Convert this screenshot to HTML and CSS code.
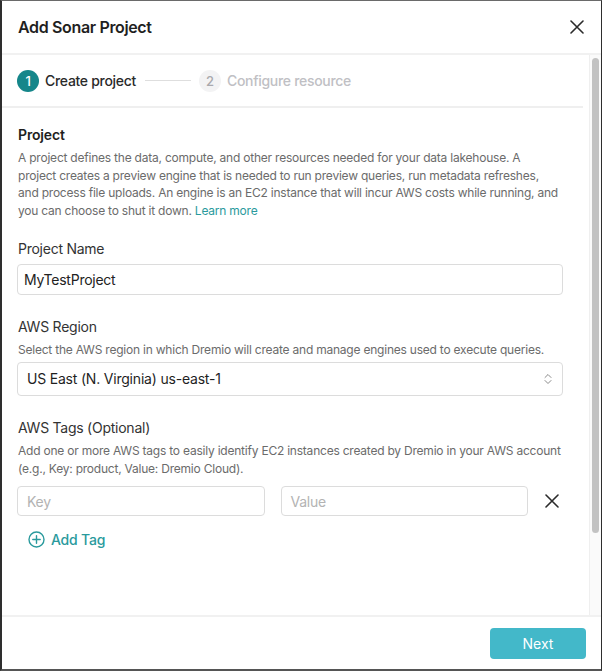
FILE: index.html
```html
<!DOCTYPE html>
<html lang="en">
<head>
<meta charset="utf-8">
<title>Add Sonar Project</title>
<link rel="stylesheet" href="styles.css">
</head>
<body>
<div class="dialog">
  <header class="dialog-header">
    <h1 class="dialog-title">Add Sonar Project</h1>
    <button class="icon-btn close-btn" aria-label="Close">
      <svg width="14" height="14" viewBox="0 0 14 14"><path d="M1 1L13 13M13 1L1 13" stroke="#2b2b2b" stroke-width="1.6" fill="none" stroke-linecap="round"/></svg>
    </button>
  </header>
  <div class="dialog-body">
    <div class="content">
      <div class="stepper">
        <div class="step active"><span class="step-num">1</span><span class="step-label">Create project</span></div>
        <span class="step-line"></span>
        <div class="step"><span class="step-num">2</span><span class="step-label">Configure resource</span></div>
      </div>
      <div class="form">
        <h2 class="section-title">Project</h2>
        <p class="help intro">A project defines the data, compute, and other resources needed for your data lakehouse. A project creates a preview engine that is needed to run preview queries, run metadata refreshes, and process file uploads. An engine is an EC2 instance that will incur AWS costs while running, and you can choose to shut it down. <a class="link" href="#">Learn more</a></p>

        <label class="field-label">Project Name</label>
        <div class="input filled">MyTestProject</div>

        <label class="field-label">AWS Region</label>
        <p class="help tight">Select the AWS region in which Dremio will create and manage engines used to execute queries.</p>
        <div class="select">
          <span>US East (N. Virginia) us-east-1</span>
          <svg width="8" height="12" viewBox="0 0 8 12"><path d="M1 4.5L4 1.5L7 4.5M1 7.5L4 10.5L7 7.5" stroke="#8a8a8a" stroke-width="1" fill="none" stroke-linecap="round" stroke-linejoin="round"/></svg>
        </div>

        <label class="field-label">AWS Tags (Optional)</label>
        <p class="help tight">Add one or more AWS tags to easily identify EC2 instances created by Dremio in your AWS account (e.g., Key: product, Value: Dremio Cloud).</p>
        <div class="tag-row">
          <div class="input placeholder">Key</div>
          <div class="input placeholder">Value</div>
          <button class="icon-btn remove-btn" aria-label="Remove tag">
            <svg width="14" height="14" viewBox="0 0 14 14"><path d="M1 1L13 13M13 1L1 13" stroke="#2b2b2b" stroke-width="1.6" fill="none" stroke-linecap="round"/></svg>
          </button>
        </div>
        <button class="add-tag">
          <svg width="17" height="17" viewBox="0 0 17 17"><circle cx="8.5" cy="8.5" r="7.5" stroke="#2a9a9d" stroke-width="1.4" fill="none"/><path d="M8.5 4.8V12.2M4.8 8.5H12.2" stroke="#2a9a9d" stroke-width="1.4" stroke-linecap="round"/></svg>
          <span>Add Tag</span>
        </button>
      </div>
    </div>
    <div class="scroll-track"><div class="scroll-thumb"></div></div>
  </div>
  <footer class="dialog-footer">
    <button class="btn-primary">Next</button>
  </footer>
</div>
</body>
</html>
```
FILE: styles.css
```css
* { box-sizing: border-box; }
html, body { margin: 0; padding: 0; background: #fff; }
body { font-family: Inter, "Noto Sans", "Liberation Sans", sans-serif; color: #202124; letter-spacing: -0.15px; }

.dialog {
  width: 602px;
  height: 671px;
  display: flex;
  flex-direction: column;
  border-top: 1px solid #6a6a6a;
  border-left: 2px solid #2e2e2e;
  border-right: 1px solid #2e2e2e;
  border-bottom: 2px solid #555;
  background: #fff;
}

.dialog-header {
  height: 54px;
  flex: none;
  display: flex;
  align-items: center;
  justify-content: space-between;
  padding: 0 17px 0 16px;
  border-bottom: 2px solid #f1f1f1;
}
.dialog-title { margin: 0; font-size: 16px; font-weight: 600; letter-spacing: -0.35px; color: #1f1f1f; }

.icon-btn { border: 0; background: none; padding: 0; display: flex; align-items: center; justify-content: center; cursor: pointer; }

.dialog-body { flex: 1; display: flex; min-height: 0; }
.content { flex: 1; min-width: 0; }

.stepper {
  height: 53px;
  display: flex;
  align-items: center;
  padding-left: 15px;
  margin-right: 6px;
  border-bottom: 2px solid #efefef;
}
.step { display: flex; align-items: center; gap: 6px; }
.step-num {
  width: 22px; height: 22px; border-radius: 50%;
  display: flex; align-items: center; justify-content: center;
  font-size: 13px; font-weight: 500;
  background: #f3f3f4; color: #a9a9ad;
}
.step-label { font-size: 14px; font-weight: 500; color: #c0c0c4; letter-spacing: -0.3px; }
.step.active .step-num { background: #15868a; color: #fff; }
.step.active .step-label { color: #2a2a2a; }
.step-line { width: 46px; height: 1px; background: #dedede; margin: 0 8px 0 9px; }

.form { padding: 17px 26px 0 15px; display: flex; flex-direction: column; }
.section-title { margin: 0 0 4px 1px; font-size: 14px; font-weight: 600; line-height: 20px; color: #1f1f1f; }
.help { margin: 0 0 0 1px; font-size: 12px; line-height: 17.6px; color: #6b6b6b; letter-spacing: -0.22px; }
.help.intro { margin-right: 3px; }
.help.tight { margin-bottom: 3px; }
.link { color: #2a9a9d; text-decoration: none; }

.field-label { display: block; margin: 20px 0 5px 1px; font-size: 14px; line-height: 20px; color: #333; letter-spacing: -0.25px; }
.input + .field-label, .select + .field-label { margin-top: 22px; }
.field-label + .help { margin-top: -1px; }

.input {
  height: 31px;
  border: 1px solid #dcdcdc;
  border-radius: 4px;
  display: flex; align-items: center;
  padding: 0 6px;
  font-size: 14px;
  color: #222;
  letter-spacing: -0.25px;
}
.input.placeholder { color: #b3b3b3; padding-left: 9px; height: 30px; }

.select {
  height: 34px;
  border: 1px solid #dcdcdc;
  border-radius: 4px;
  display: flex; align-items: center; justify-content: space-between;
  padding: 0 10px 0 9px;
  font-size: 14px;
  letter-spacing: -0.2px;
  color: #1f1f1f;
}

.tag-row { display: grid; grid-template-columns: 1fr 1fr 19px; column-gap: 16px; align-items: center; margin-top: 6px; }
.tag-row .remove-btn { justify-self: start; margin-left: 1px; }

.add-tag {
  align-self: flex-start;
  display: flex; align-items: center; gap: 6px;
  margin: 15px 0 0 11px;
  padding: 0; border: 0; background: none;
  font-family: inherit; font-size: 14px; font-weight: 500; color: #2a9a9d; letter-spacing: -0.2px;
}

.scroll-track { width: 12px; flex: none; background: #fafafa; border-left: 1px solid #efefef; padding: 3px 0 0 2px; }
.scroll-thumb { width: 7px; height: 475px; border-radius: 4px; background: #c2c2c2; }

.dialog-footer {
  height: 54px;
  flex: none;
  border-top: 2px solid #f1f1f1;
  display: flex; align-items: center; justify-content: flex-end;
  padding: 0 15px 0 0;
}
.btn-primary {
  width: 96px; height: 31px;
  border: 0; border-radius: 4px;
  background: #43b8c9; color: #fff;
  font-family: inherit; font-size: 14px;
}
```
